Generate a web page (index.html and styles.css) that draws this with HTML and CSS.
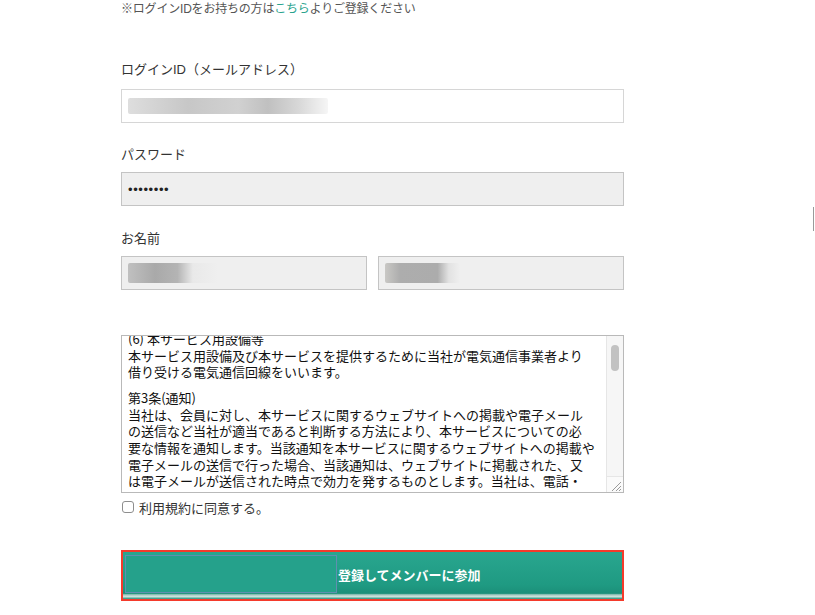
FILE: index.html
```html
<!DOCTYPE html>
<html lang="ja">
<head>
<meta charset="utf-8">
<title>登録</title>
<link rel="stylesheet" href="styles.css">
</head>
<body>
<div class="page">
  <form class="form">
    <p class="note">※ログインIDをお持ちの方は<a class="link" href="#">こちら</a>よりご登録ください</p>

    <div class="group group-first">
      <label class="label label-first">ログインID（メールアドレス）</label>
      <div class="input input-white"><span class="blur blur-email"></span></div>
    </div>

    <div class="group">
      <label class="label">パスワード</label>
      <div class="input input-gray"><span class="dots">••••••••</span></div>
    </div>

    <div class="group group-name">
      <label class="label">お名前</label>
      <div class="name-row">
        <div class="input input-gray"><span class="blur blur-name1"></span></div>
        <div class="input input-gray"><span class="blur blur-name2"></span></div>
      </div>
    </div>

    <div class="terms">
      <div class="terms-view">
        <div class="terms-text">
          <div class="line">(6) 本サービス用設備等</div>
          <div class="line">本サービス用設備及び本サービスを提供するために当社が電気通信事業者より</div>
          <div class="line">借り受ける電気通信回線をいいます。</div>
          <div class="blank"></div>
          <div class="line">第3条(通知)</div>
          <div class="line">当社は、会員に対し、本サービスに関するウェブサイトへの掲載や電子メール</div>
          <div class="line">の送信など当社が適当であると判断する方法により、本サービスについての必</div>
          <div class="line">要な情報を通知します。当該通知を本サービスに関するウェブサイトへの掲載や</div>
          <div class="line">電子メールの送信で行った場合、当該通知は、ウェブサイトに掲載された、又</div>
          <div class="line">は電子メールが送信された時点で効力を発するものとします。当社は、電話・</div>
        </div>
      </div>
      <div class="scrollbar">
        <div class="thumb"></div>
        <div class="grip">
          <svg width="16" height="16" viewBox="0 0 16 16"><path d="M14 5 L5 14 M14 9 L9 14 M14 12 L12 14" stroke="#9a9a9a" stroke-width="1" fill="none"/></svg>
        </div>
      </div>
    </div>

    <label class="agree"><span class="checkbox"></span>利用規約に同意する。</label>

    <div class="submit">
      <div class="submit-inner">
        <span class="focus-box"></span>
        <span class="submit-text">登録してメンバーに参加</span>
      </div>
    </div>
  </form>
  <div class="edge-line"></div>
</div>
</body>
</html>
```

FILE: styles.css
```css
* { box-sizing: border-box; }
html, body { margin: 0; padding: 0; background: #fff; }
body {
  font-family: "Liberation Sans", "Noto Sans CJK JP", sans-serif;
  color: #333;
  width: 815px;
  height: 615px;
  overflow: hidden;
}
.page { position: relative; width: 815px; height: 615px; }
.form {
  width: 503px;
  margin-left: 121px;
  display: flex;
  flex-direction: column;
}
.note {
  margin: 0;
  font-size: 12px;
  line-height: 18px;
  color: #555;
  letter-spacing: -0.2px;
}
.link { color: #2aa38e; text-decoration: none; }
.group { display: flex; flex-direction: column; margin-top: 22px; }
.group-first { margin-top: 42px; }
.group-name { margin-top: 23px; }
.label {
  font-size: 13px;
  line-height: 20px;
  height: 20px;
  color: #333;
  margin-bottom: 7px;
}
.label-first { margin-bottom: 9px; }
.input {
  height: 34px;
  border: 1px solid #cfcfcf;
  display: flex;
  align-items: center;
  padding-left: 6px;
}
.input-white { background: #fff; border-color: #d6d6d6; }
.input-gray { background: #efefef; border-color: #c4c4c4; }
.name-row { display: grid; grid-template-columns: 246px 246px; column-gap: 11px; }
.blur { display: block; height: 16px; border-radius: 2px; }
.blur-email {
  width: 200px;
  background: linear-gradient(90deg, #d8d8d8 0%, #bdbdbd 30%, #c9c9c9 55%, #b5b5b5 70%, #d0d0d0 85%, #f4f4f4 100%);
  opacity: 0.85;
}
.blur-name1 {
  width: 90px;
  height: 20px;
  background: linear-gradient(90deg, #c0c0c0 0%, #a9a9a9 30%, #b4b4b4 55%, #e9e9e9 72%, #efefef 100%);
}
.blur-name2 {
  width: 75px;
  height: 20px;
  background: linear-gradient(90deg, #c9c8c5 0%, #adadad 20%, #acacac 70%, #e2e2e2 85%, #efefef 100%);
}
.dots { font-size: 13px; letter-spacing: 0.6px; color: #222; line-height: 1; }

.terms {
  margin-top: 45px;
  height: 158px;
  border: 1px solid #b9b9b9;
  display: flex;
  background: #fff;
}
.terms-view {
  flex: 1;
  overflow: hidden;
  padding: 0 0 0 6px;
}
.terms-text {
  margin-top: -5px;
  font-family: "Noto Sans CJK JP", sans-serif;
  font-size: 13px;
  line-height: 16.6px;
  color: #111;
}
.line { white-space: nowrap; height: 16.6px; }
.blank { height: 9.4px; }
.scrollbar {
  width: 17px;
  background: #f6f6f6;
  border-left: 1px solid #e6e6e6;
  display: flex;
  flex-direction: column;
  align-items: center;
}
.thumb {
  width: 8px;
  height: 26px;
  margin-top: 9px;
  border-radius: 4px;
  background: #c2c2c2;
}
.grip {
  margin-top: auto;
  width: 16px;
  height: 16px;
  border-top: 1px solid #e6e6e6;
  background: #fafafa;
}
.grip svg { display: block; }

.agree {
  display: flex;
  align-items: center;
  margin-top: 6px;
  height: 16px;
  font-size: 13px;
  color: #333;
  font-family: "Noto Sans CJK JP", sans-serif;
}
.checkbox {
  width: 12px;
  height: 12px;
  border: 1px solid #8e8e8e;
  border-radius: 3px;
  background: #fff;
  margin: 0 5px 0 1px;
}

.submit {
  margin-top: 35px;
  height: 51px;
  border: 2px solid #f43a2b;
  background: #fff;
}
.submit-inner {
  height: 100%;
  background: linear-gradient(180deg, #29a68f 0%, #1f9a82 70%, #1b8f79 88%, #9fc9c0 91%, #cfe3dd 95%, #1b8f79 100%);
  display: flex;
  align-items: center;
  padding-left: 2px;
}
.focus-box {
  width: 212px;
  height: 38px;
  border: 1px solid #5f8fb0;
  background: #25a18b;
  margin-top: -3px;
}
.submit-text {
  color: #fff;
  font-weight: bold;
  font-size: 13px;
  font-family: "Noto Sans CJK JP", sans-serif;
  margin-left: 1px;
  margin-top: -3px;
}
.edge-line {
  position: absolute;
  left: 813px;
  top: 207px;
  width: 1px;
  height: 24px;
  background: #9a9a9a;
}
```
